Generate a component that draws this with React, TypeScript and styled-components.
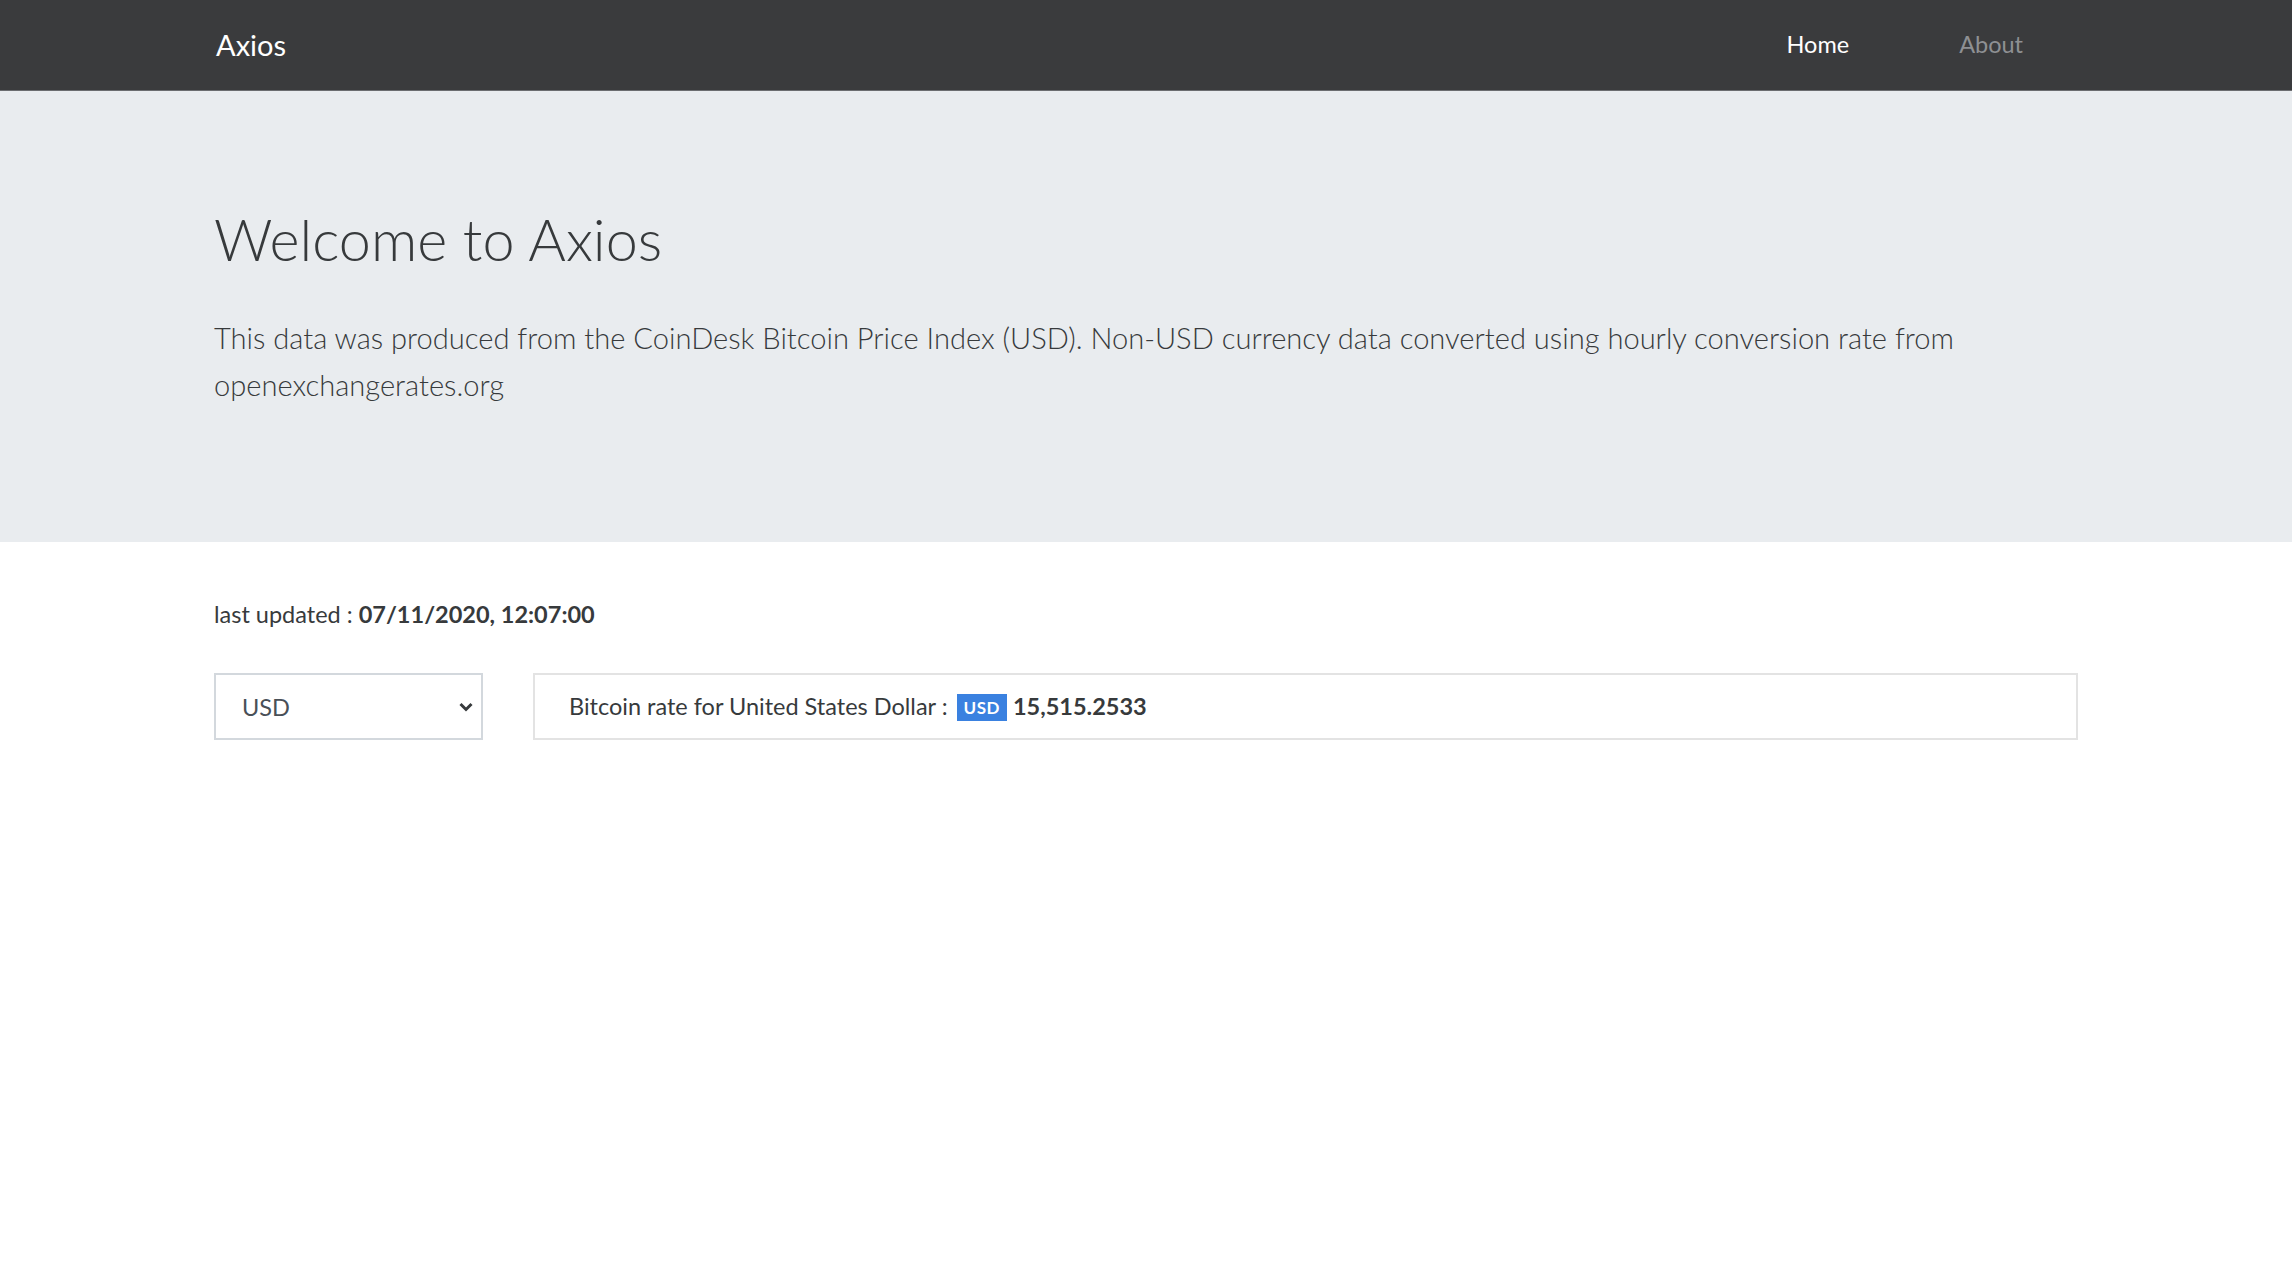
import React from 'react';
import styled, { createGlobalStyle } from 'styled-components';

const GlobalStyle = createGlobalStyle`
  html, body {
    margin: 0;
    padding: 0;
    background: #ffffff;
  }
  body {
    font-family: Lato, "Open Sans", "Noto Sans", sans-serif;
    color: #373a3c;
    font-size: 23.5px;
    line-height: 1.5;
  }
  * {
    box-sizing: border-box;
  }
`;

const Container = styled.div`
  max-width: 1864px;
  margin: 0 auto;
`;

const Navbar = styled.nav`
  background: #3a3b3d;
  height: 91px;
  border-bottom: 1px solid #6b6d70;
`;

const NavInner = styled(Container)`
  display: flex;
  align-items: center;
  justify-content: space-between;
  height: 100%;
`;

const Brand = styled.a`
  color: #ffffff;
  font-size: 29px;
  text-decoration: none;
  margin-top: -1px;
  margin-left: 2px;
`;

const NavList = styled.ul`
  display: flex;
  list-style: none;
  margin: 0;
  padding: 0;
`;

const NavLink = styled.a<{ $active?: boolean }>`
  display: block;
  padding: 0 55px;
  color: ${({ $active }) => ($active ? '#ffffff' : '#8e9093')};
  font-size: 23.5px;
  text-decoration: none;
`;

const Jumbotron = styled.header`
  background: #e9ecef;
  height: 451px;
  padding-top: 108px;
`;

const Title = styled.h1`
  margin: 0 0 36px;
  font-size: 57.5px;
  font-weight: 300;
  line-height: 79px;
  color: #373a3c;
`;

const Lead = styled.p`
  margin: 0;
  font-size: 29.1px;
  font-weight: 300;
  line-height: 47px;
  color: #373a3c;
`;

const Main = styled(Container)`
  padding-top: 53px;
`;

const Updated = styled.p`
  margin: 0 0 40px;
  line-height: 38px;
`;

const Row = styled.div`
  display: flex;
  gap: 50px;
`;

const Select = styled.select`
  width: 269px;
  height: 67px;
  padding: 0 16px 0 26px;
  border: 2px solid #d3d8dd;
  border-radius: 0;
  background: #ffffff;
  color: #495057;
  font-family: inherit;
  font-size: 23.5px;
  appearance: none;
  background-image: url("data:image/svg+xml,%3Csvg xmlns='http://www.w3.org/2000/svg' width='14' height='10' viewBox='0 0 14 10'%3E%3Cpath d='M1.5 2 L7 7.5 L12.5 2' fill='none' stroke='%23373a3c' stroke-width='3'/%3E%3C/svg%3E");
  background-repeat: no-repeat;
  background-position: right 8px center;
`;

const RateBox = styled.div`
  flex: 1;
  height: 67px;
  display: flex;
  align-items: center;
  padding: 0 34px;
  border: 2px solid #e3e3e3;
`;

const Badge = styled.span`
  display: inline-flex;
  align-items: center;
  justify-content: center;
  height: 27px;
  padding: 0 7px;
  margin: 2px 6px 0 9px;
  background: #3a81e0;
  color: #ffffff;
  font-size: 17px;
  font-weight: 700;
  letter-spacing: 0.5px;
`;

const Amount = styled.strong`
  font-weight: 700;
`;

export default function App() {
  return (
    <>
      <GlobalStyle />
      <Navbar>
        <NavInner>
          <Brand href="#">Axios</Brand>
          <NavList>
            <li>
              <NavLink href="#" $active>
                Home
              </NavLink>
            </li>
            <li>
              <NavLink href="#">About</NavLink>
            </li>
          </NavList>
        </NavInner>
      </Navbar>
      <Jumbotron>
        <Container>
          <Title>Welcome to Axios</Title>
          <Lead>
            This data was produced from the CoinDesk Bitcoin Price Index (USD). Non-USD currency data
            converted using hourly conversion rate from openexchangerates.org
          </Lead>
        </Container>
      </Jumbotron>
      <Main>
        <Updated>
          last updated : <Amount>07/11/2020, 12:07:00</Amount>
        </Updated>
        <Row>
          <Select defaultValue="USD">
            <option value="USD">USD</option>
            <option value="GBP">GBP</option>
            <option value="EUR">EUR</option>
          </Select>
          <RateBox>
            Bitcoin rate for United States Dollar :<Badge>USD</Badge>
            <Amount>15,515.2533</Amount>
          </RateBox>
        </Row>
      </Main>
    </>
  );
}
